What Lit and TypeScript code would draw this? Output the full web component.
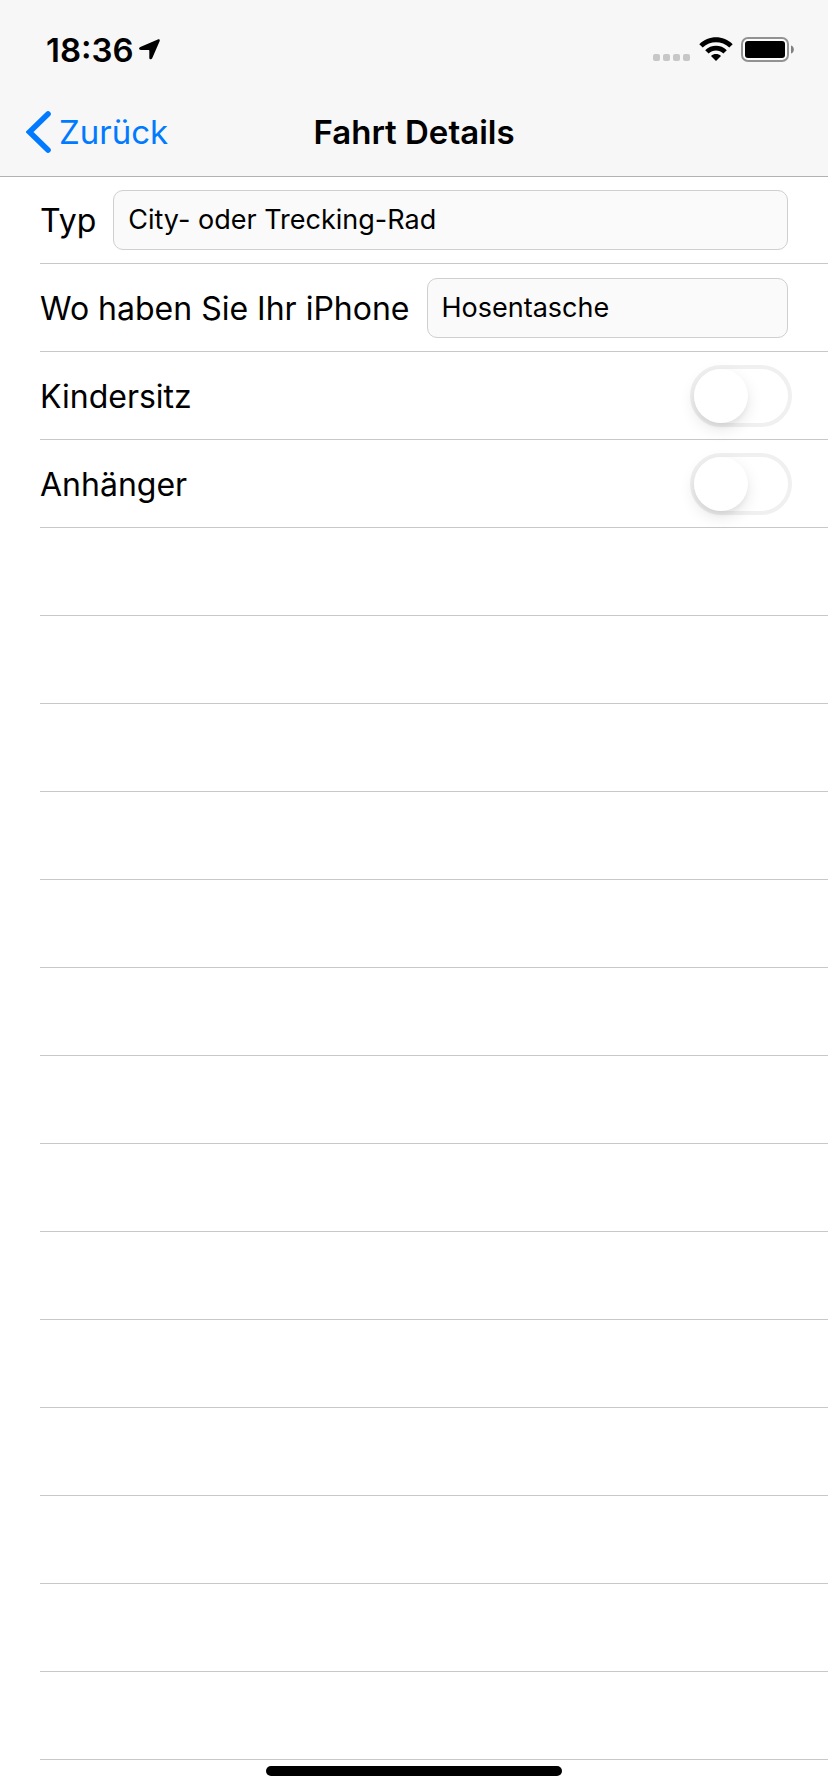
import { LitElement, html, css } from "lit";
import { customElement, state } from "lit/decorators.js";

const EMPTY_ROWS = 14;

@customElement("app-root")
export class AppRoot extends LitElement {
  @state() private bikeType = "City- oder Trecking-Rad";
  @state() private phonePlace = "Hosentasche";

  static styles = css`
    :host {
      display: block;
      position: relative;
      min-height: 100vh;
      background: #ffffff;
      color: #000000;
      font-family: Inter, "Liberation Sans", sans-serif;
      font-size: 32px;
      line-height: 40px;
    }
    * {
      box-sizing: border-box;
    }
    svg {
      display: block;
      flex: none;
    }
    .top {
      background: #f7f7f7;
      box-shadow: 0 1px 0 #b2b2b2;
      position: relative;
      font-size: 33px;
    }
    .status {
      display: flex;
      align-items: center;
      justify-content: space-between;
      height: 88px;
      padding: 11px 34px 0 46px;
    }
    .clock,
    .signals {
      display: flex;
      align-items: center;
      gap: 8px;
    }
    .clock {
      gap: 5px;
      font-weight: 600;
    }
    .nav {
      display: grid;
      grid-template-columns: 1fr auto 1fr;
      align-items: center;
      height: 88px;
      padding: 0 26px;
    }
    .back {
      display: flex;
      align-items: center;
      justify-self: start;
      gap: 8px;
      color: #007aff;
      text-decoration: none;
    }
    .title {
      margin: 0;
      font-size: 33px;
      line-height: 40px;
      font-weight: 600;
    }
    .list {
      list-style: none;
      margin: 0;
      padding: 0 0 32px 40px;
    }
    .row {
      display: flex;
      align-items: center;
      gap: 17px;
      height: 88px;
      padding-right: 40px;
      border-bottom: 1px solid #c8c8c8;
    }
    .row.toggle {
      justify-content: space-between;
      padding-right: 36px;
    }
    .label {
      padding-top: 2px;
      white-space: nowrap;
    }
    .field {
      flex: 1;
      min-width: 0;
      height: 60px;
      margin: 0;
      padding: 0 14px;
      border: 1px solid #cfcfcf;
      border-radius: 10px;
      background: #fafafa;
      color: inherit;
      font: inherit;
      font-size: 27px;
      outline: none;
    }
    .switch {
      appearance: none;
      flex: none;
      width: 102px;
      height: 62px;
      margin: 0;
      border: 4px solid #f0f0f0;
      border-radius: 31px;
      background: #ffffff;
    }
    .switch::before {
      content: "";
      display: block;
      width: 54px;
      height: 54px;
      border-radius: 50%;
      background: #ffffff;
      box-shadow: 0 6px 16px rgba(0, 0, 0, 0.1), 0 4px 4px rgba(0, 0, 0, 0.04);
    }
    .switch:checked {
      border-color: #4cd964;
      background: #4cd964;
    }
    .switch:checked::before {
      margin-left: 40px;
    }
    .home {
      position: absolute;
      bottom: 16px;
      left: 50%;
      width: 296px;
      height: 10px;
      border-radius: 5px;
      background: #000000;
      transform: translateX(-50%);
    }
  `;

  private renderStatus() {
    return html`
      <div class="status">
        <div class="clock">
          <span>18:36</span>
          <svg width="21" height="21" viewBox="0 0 21 21" aria-hidden="true">
            <path
              d="M18.8 0.4C20.300-0.200 21.200 0.700 20.600 2.200L13.200 19.200C12.500 20.900 10.300 20.600 10.300 18.800V11.500Q10.300 10.900 9.700 10.900H2C-0.300 10.900-0.600 8.600 1.300 7.900Z"
            />
          </svg>
        </div>
        <div class="signals">
          <svg width="38" height="25" viewBox="0 0 38 25" fill="#c7c7c7" aria-hidden="true">
            <rect x="0" y="17" width="7" height="7" rx="2" />
            <rect x="10" y="17" width="7" height="7" rx="2" />
            <rect x="20" y="17" width="7" height="7" rx="2" />
            <rect x="30" y="17" width="7" height="7" rx="2" />
          </svg>
          <svg width="34" height="25" viewBox="0 0 34 25" aria-hidden="true">
            <path
              d="M0.300 7.200C9.500-2.100 24.500-2.100 33.700 7.200L30.300 10.600C23 3.400 11 3.400 3.700 10.600Z"
            />
            <path
              d="M6.200 13.200C12.200 7.300 21.800 7.300 27.800 13.200L24.400 16.600C20.300 12.600 13.700 12.600 9.600 16.600Z"
            />
            <path d="M12 19C14.800 16.400 19.200 16.400 22 19L17 24Z" />
          </svg>
          <svg width="53" height="25" viewBox="0 0 53 25" aria-hidden="true">
            <rect x="1" y="1" width="46" height="23" rx="6" fill="#fbfbfb" stroke="#929292" stroke-width="2" />
            <rect x="4" y="4" width="40" height="17" rx="3" />
            <path d="M50 8.500C53.800 9.500 53.800 15.500 50 16.500Z" fill="#808080" />
          </svg>
        </div>
      </div>
    `;
  }

  render() {
    return html`
      <header class="top">
        ${this.renderStatus()}
        <nav class="nav">
          <a class="back" href="#">
            <svg width="25" height="42" viewBox="0 0 25 42" fill="none" aria-hidden="true">
              <path d="M22 3L3.500 21L22 39" stroke="#007aff" stroke-width="5.600" stroke-linecap="round" />
            </svg>
            <span>Zurück</span>
          </a>
          <h1 class="title">Fahrt Details</h1>
        </nav>
      </header>
      <ul class="list">
        <li class="row">
          <label class="label" for="type">Typ</label>
          <input
            class="field"
            id="type"
            type="text"
            .value=${this.bikeType}
            @input=${(e: Event) => (this.bikeType = (e.target as HTMLInputElement).value)}
          />
        </li>
        <li class="row">
          <label class="label" for="place">Wo haben Sie Ihr iPhone</label>
          <input
            class="field"
            id="place"
            type="text"
            .value=${this.phonePlace}
            @input=${(e: Event) => (this.phonePlace = (e.target as HTMLInputElement).value)}
          />
        </li>
        <li class="row toggle">
          <label class="label" for="seat">Kindersitz</label>
          <input class="switch" id="seat" type="checkbox" />
        </li>
        <li class="row toggle">
          <label class="label" for="trailer">Anhänger</label>
          <input class="switch" id="trailer" type="checkbox" />
        </li>
        ${Array.from({ length: EMPTY_ROWS }, () => html`<li class="row" aria-hidden="true"></li>`)}
      </ul>
      <div class="home"></div>
    `;
  }
}
